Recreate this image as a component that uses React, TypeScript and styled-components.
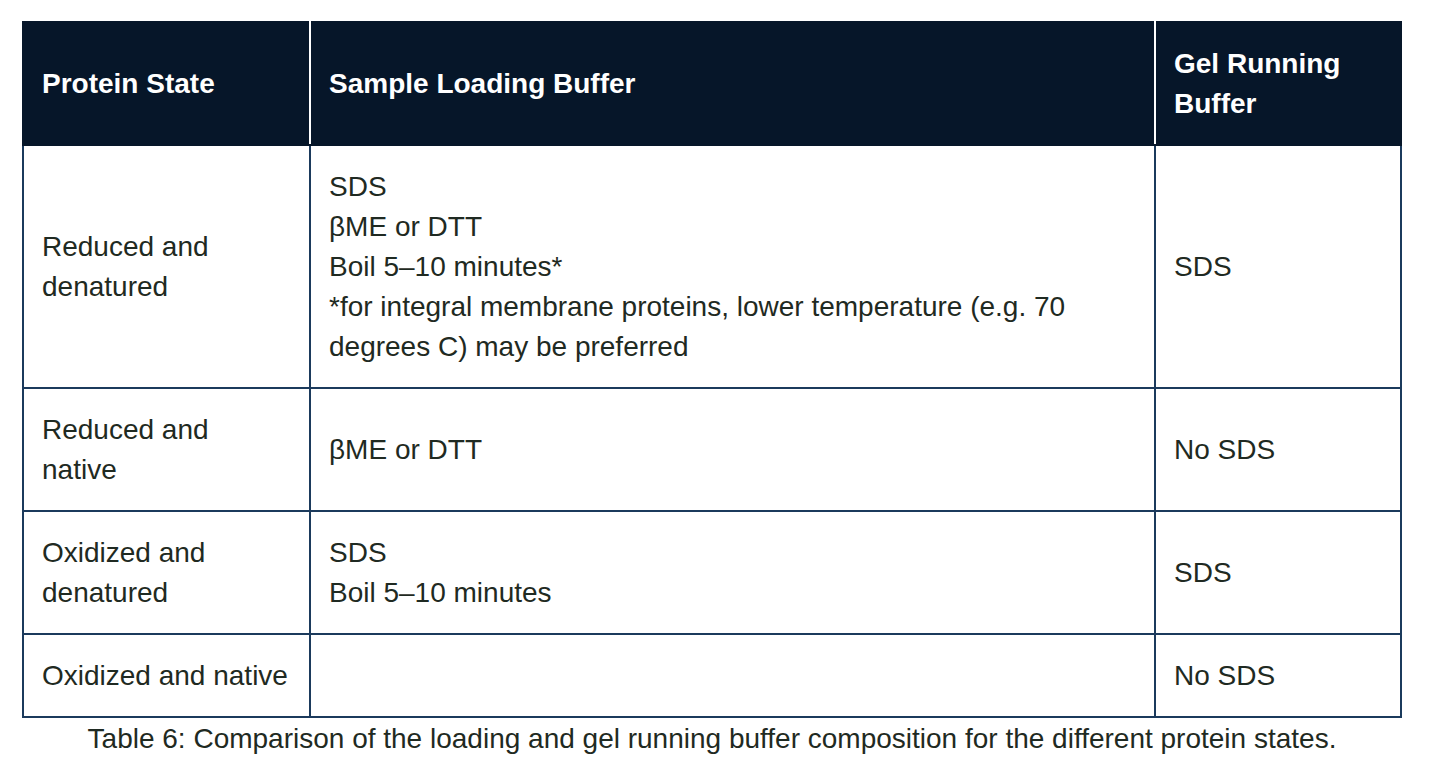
import React from "react";
import styled, { createGlobalStyle } from "styled-components";

const GlobalStyle = createGlobalStyle`
  html, body {
    margin: 0;
    padding: 0;
    background: #ffffff;
  }
  body {
    font-family: "Liberation Sans", Arial, Helvetica, sans-serif;
    color: #1f2a22;
  }
`;

const Figure = styled.figure`
  margin: 0;
  padding: 21px 31px 0 23px;
  display: flex;
  flex-direction: column;
  align-items: center;
`;

const Table = styled.table`
  width: 1378px;
  border-collapse: collapse;
  table-layout: fixed;
  font-size: 28px;
  line-height: 40px;
`;

const HeadCell = styled.th<{ $w: number }>`
  box-sizing: border-box;
  width: ${(p) => p.$w}px;
  background: #061629;
  color: #ffffff;
  font-weight: bold;
  text-align: left;
  vertical-align: middle;
  padding: 21px 18px 20px 18px;
  border: 2px solid #061629;
  border-left-color: #ffffff;
  border-right-color: #ffffff;

  &:first-child {
    border-left-color: #061629;
  }
  &:last-child {
    border-right-color: #061629;
  }
`;

const Cell = styled.td`
  box-sizing: border-box;
  text-align: left;
  vertical-align: middle;
  padding: 21px 18px 20px 18px;
  border: 2px solid #1b3a5c;
`;

const Caption = styled.figcaption`
  margin-top: 1px;
  font-size: 28px;
  line-height: 40px;
  color: #1f2a22;
  text-align: center;
`;

type Row = { state: React.ReactNode; loading: string[]; gel: string };

const rows: Row[] = [
  {
    state: (
      <>
        Reduced and
        <br />
        denatured
      </>
    ),
    loading: [
      "SDS",
      "βME or DTT",
      "Boil 5–10 minutes*",
      "*for integral membrane proteins, lower temperature (e.g. 70 degrees C) may be preferred",
    ],
    gel: "SDS",
  },
  {
    state: (
      <>
        Reduced and
        <br />
        native
      </>
    ),
    loading: ["βME or DTT"],
    gel: "No SDS",
  },
  {
    state: (
      <>
        Oxidized and
        <br />
        denatured
      </>
    ),
    loading: ["SDS", "Boil 5–10 minutes"],
    gel: "SDS",
  },
  {
    state: "Oxidized and native",
    loading: [],
    gel: "No SDS",
  },
];

export default function App() {
  return (
    <>
      <GlobalStyle />
      <Figure>
        <Table>
          <thead>
            <tr>
              <HeadCell $w={287}>Protein State</HeadCell>
              <HeadCell $w={845}>Sample Loading Buffer</HeadCell>
              <HeadCell $w={246}>
                Gel Running
                <br />
                Buffer
              </HeadCell>
            </tr>
          </thead>
          <tbody>
            {rows.map((r, i) => (
              <tr key={i}>
                <Cell>{r.state}</Cell>
                <Cell>
                  {r.loading.map((l, j) => (
                    <React.Fragment key={j}>
                      {j > 0 && <br />}
                      {l}
                    </React.Fragment>
                  ))}
                </Cell>
                <Cell>{r.gel}</Cell>
              </tr>
            ))}
          </tbody>
        </Table>
        <Caption>
          Table 6: Comparison of the loading and gel running buffer composition for the different protein states.
        </Caption>
      </Figure>
    </>
  );
}
